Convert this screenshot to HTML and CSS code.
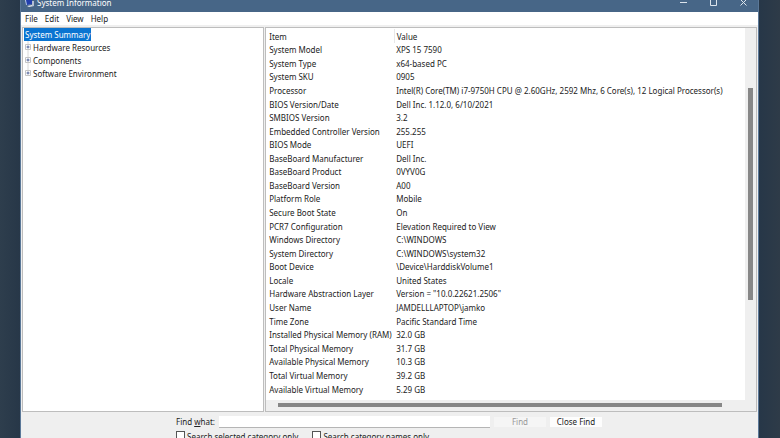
FILE: index.html
```
<!DOCTYPE html>
<html lang="en">

<head>
    <meta charset="UTF-8">
    <meta name="viewport" content="width=device-width, initial-scale=1.0">
    <title>System Information</title>
    <link rel="stylesheet" href="styles.css">
</head>

<body>
    <div class="window">
        <header class="titlebar">
            <svg class="logo" viewBox="0 0 10 8" aria-hidden="true">
                <path d="M0 0h7v4l-6 1z" fill="#b9cbea" />
                <path d="M1 0h6v4l-5 1z" fill="#2340ad" />
                <path d="M2 6l5-1 2 1-5 1z" fill="#e3e7ee" />
                <path d="M7 1h2v5H7z" fill="#b3bfd2" />
            </svg>
            <span class="title">System Information</span>
            <button class="winbtn" aria-label="Minimize"><svg viewBox="0 0 7 7"><path d="M0 2.5h7" /></svg></button>
            <button class="winbtn" aria-label="Maximize"><svg viewBox="0 0 7 7"><path d="M.5 -.5h6v6h-6z" /></svg></button>
            <button class="winbtn" aria-label="Close"><svg viewBox="0 0 7 7"><path d="M.5 -.5l6 6M6.5 -.5l-6 6" /></svg></button>
        </header>
        <nav class="menu">
            <button>File</button>
            <button>Edit</button>
            <button>View</button>
            <button>Help</button>
        </nav>
        <main class="panes">
            <ul class="tree">
                <li><a href="#" class="selected">System Summary</a></li>
                <li class="branch"><svg class="plus" viewBox="0 0 6 13"><path d="M3 0v13" stroke="#d8d8d8" /><path d="M.5 3.5h5v5h-5z" fill="#fff" stroke="#c4c4c4" /><path d="M1.5 6h3M3 4.5v3" stroke="#53649a" /></svg><a href="#">Hardware Resources</a></li>
                <li class="branch"><svg class="plus" viewBox="0 0 6 13"><path d="M3 0v13" stroke="#d8d8d8" /><path d="M.5 3.5h5v5h-5z" fill="#fff" stroke="#c4c4c4" /><path d="M1.5 6h3M3 4.5v3" stroke="#53649a" /></svg><a href="#">Components</a></li>
                <li class="branch"><svg class="plus" viewBox="0 0 6 13"><path d="M3 0v4" stroke="#d8d8d8" /><path d="M.5 3.5h5v5h-5z" fill="#fff" stroke="#c4c4c4" /><path d="M1.5 6h3M3 4.5v3" stroke="#53649a" /></svg><a href="#">Software Environment</a></li>
            </ul>
            <section class="details">
                <div class="list">
                    <table>
                        <thead>
                            <tr><th class="item">Item</th><th>Value</th></tr>
                        </thead>
                        <tbody>
                            <tr><td>System Model</td><td>XPS 15 7590</td></tr>
                            <tr><td>System Type</td><td>x64-based PC</td></tr>
                            <tr><td>System SKU</td><td>0905</td></tr>
                            <tr><td>Processor</td><td>Intel(R) Core(TM) i7-9750H CPU @ 2.60GHz, 2592 Mhz, 6 Core(s), 12 Logical Processor(s)</td></tr>
                            <tr><td>BIOS Version/Date</td><td>Dell Inc. 1.12.0, 6/10/2021</td></tr>
                            <tr><td>SMBIOS Version</td><td>3.2</td></tr>
                            <tr><td>Embedded Controller Version</td><td>255.255</td></tr>
                            <tr><td>BIOS Mode</td><td>UEFI</td></tr>
                            <tr><td>BaseBoard Manufacturer</td><td>Dell Inc.</td></tr>
                            <tr><td>BaseBoard Product</td><td>0VYV0G</td></tr>
                            <tr><td>BaseBoard Version</td><td>A00</td></tr>
                            <tr><td>Platform Role</td><td>Mobile</td></tr>
                            <tr><td>Secure Boot State</td><td>On</td></tr>
                            <tr><td>PCR7 Configuration</td><td>Elevation Required to View</td></tr>
                            <tr><td>Windows Directory</td><td>C:\WINDOWS</td></tr>
                            <tr><td>System Directory</td><td>C:\WINDOWS\system32</td></tr>
                            <tr><td>Boot Device</td><td>\Device\HarddiskVolume1</td></tr>
                            <tr><td>Locale</td><td>United States</td></tr>
                            <tr><td>Hardware Abstraction Layer</td><td>Version = "10.0.22621.2506"</td></tr>
                            <tr><td>User Name</td><td>JAMDELLLAPTOP\jamko</td></tr>
                            <tr><td>Time Zone</td><td>Pacific Standard Time</td></tr>
                            <tr><td>Installed Physical Memory (RAM)</td><td>32.0 GB</td></tr>
                            <tr><td>Total Physical Memory</td><td>31.7 GB</td></tr>
                            <tr><td>Available Physical Memory</td><td>10.3 GB</td></tr>
                            <tr><td>Total Virtual Memory</td><td>39.2 GB</td></tr>
                            <tr><td>Available Virtual Memory</td><td>5.29 GB</td></tr>
                        </tbody>
                    </table>
                </div>
                <div class="vscroll"><div class="thumb"></div></div>
                <div class="hscroll"><div class="thumb"></div></div>
            </section>
        </main>
        <form class="find">
            <div class="find-row">
                <label for="what">Find <u>w</u>hat:</label>
                <input type="text" id="what" class="what">
                <button type="button" class="btn" disabled>Find</button>
                <button type="button" class="btn">Close Find</button>
            </div>
            <div class="find-options">
                <label><input type="checkbox">Search selected category only</label>
                <label><input type="checkbox">Search category names only</label>
            </div>
        </form>
    </div>
</body>

</html>
```
FILE: styles.css
```
* {
    box-sizing: border-box;
    margin: 0;
    padding: 0;
}

body {
    height: 100vh;
    padding: 0 21px 0 20px;
    overflow: hidden;
    background: linear-gradient(90deg, #2e3e4d, #273748 20px, #273748 calc(100% - 20px), #2e3b48);
    font: 8px/12px "Noto Sans", "Open Sans", sans-serif;
    color: #222;
}

button,
input {
    font: inherit;
    color: inherit;
    border: 0;
    background: none;
}

a {
    color: inherit;
    text-decoration: none;
}

.window {
    display: flex;
    flex-direction: column;
    height: 100%;
    border: solid #5b7898;
    border-width: 0 1px;
    background: #efefef;
}

.titlebar {
    display: flex;
    align-items: flex-start;
    flex: none;
    height: 12px;
    padding-left: 4px;
    line-height: 6px;
    color: #fff;
    background: #476687;
}

.logo {
    flex: none;
    width: 10px;
    height: 8px;
    margin-right: 2px;
}

.title {
    flex: 1;
}

.winbtn {
    width: 30px;
    height: 6px;
    line-height: 6px;
}

.winbtn svg {
    display: block;
    width: 7px;
    height: 7px;
    margin: 0 auto;
    fill: none;
    stroke: #dce4ec;
}

.menu {
    display: flex;
    flex: none;
    gap: 7px;
    height: 13px;
    padding-left: 4px;
    background: #fff;
}

.menu button {
    line-height: 13px;
}

.panes {
    display: grid;
    grid-template-columns: 33fr 67fr;
    gap: 1px;
    flex: 1;
    min-height: 0;
    padding: 2px 1px 0;
}

.tree,
.details {
    border: 1px solid #bdbdbd;
    background: #fff;
}

.tree {
    list-style: none;
    padding: 0 1px;
}

.tree li {
    display: flex;
    align-items: center;
    height: 13px;
}

.tree .branch {
    gap: 2px;
    padding-left: 1px;
}

.selected {
    padding: 0 1px;
    line-height: 13px;
    color: #fff;
    background: #0a74d1;
}

.plus {
    width: 6px;
    height: 13px;
    fill: none;
}

.details {
    display: grid;
    grid-template-columns: 1fr 11px;
    grid-template-rows: 1fr 11px;
    min-width: 0;
}

.list {
    min-width: 0;
    padding: 1px 0 4px 3px;
    overflow: hidden;
}

table {
    width: 100%;
    height: 100%;
    border-collapse: collapse;
    line-height: 11px;
    white-space: nowrap;
}

th,
td {
    text-align: left;
    font-weight: normal;
    vertical-align: middle;
}

th {
    height: 14px;
}

th + th,
td + td {
    padding-left: 2px;
}

.item {
    width: 125px;
    border-right: 1px solid #e8e8e8;
}

.vscroll,
.hscroll {
    background: #efefef;
}

.vscroll {
    padding: 60px 3px 100px;
}

.hscroll {
    grid-column: 1 / -1;
    padding: 3px 34px 4px 12px;
}

.thumb {
    height: 100%;
    background: #878787;
}

.find {
    flex: none;
    height: 26px;
    padding: 4px 0 0 155px;
}

.find-row {
    display: flex;
    align-items: center;
    gap: 4px;
    padding-right: 156px;
}

.what {
    flex: 1;
    min-width: 0;
    height: 12px;
    background: #fff;
    border-bottom: 1px solid #b5b5b5;
}

.btn {
    width: 52px;
    height: 10px;
    line-height: 10px;
    background: #fdfdfd;
}

.btn:disabled {
    color: #999;
    background: #f5f5f5;
}

.find-options {
    display: flex;
    gap: 14px;
    padding-top: 3px;
}

.find-options label {
    display: flex;
    gap: 2px;
}

.find-options input {
    appearance: none;
    width: 9px;
    height: 9px;
    border: 1px solid #555;
    background: #fff;
}
```
